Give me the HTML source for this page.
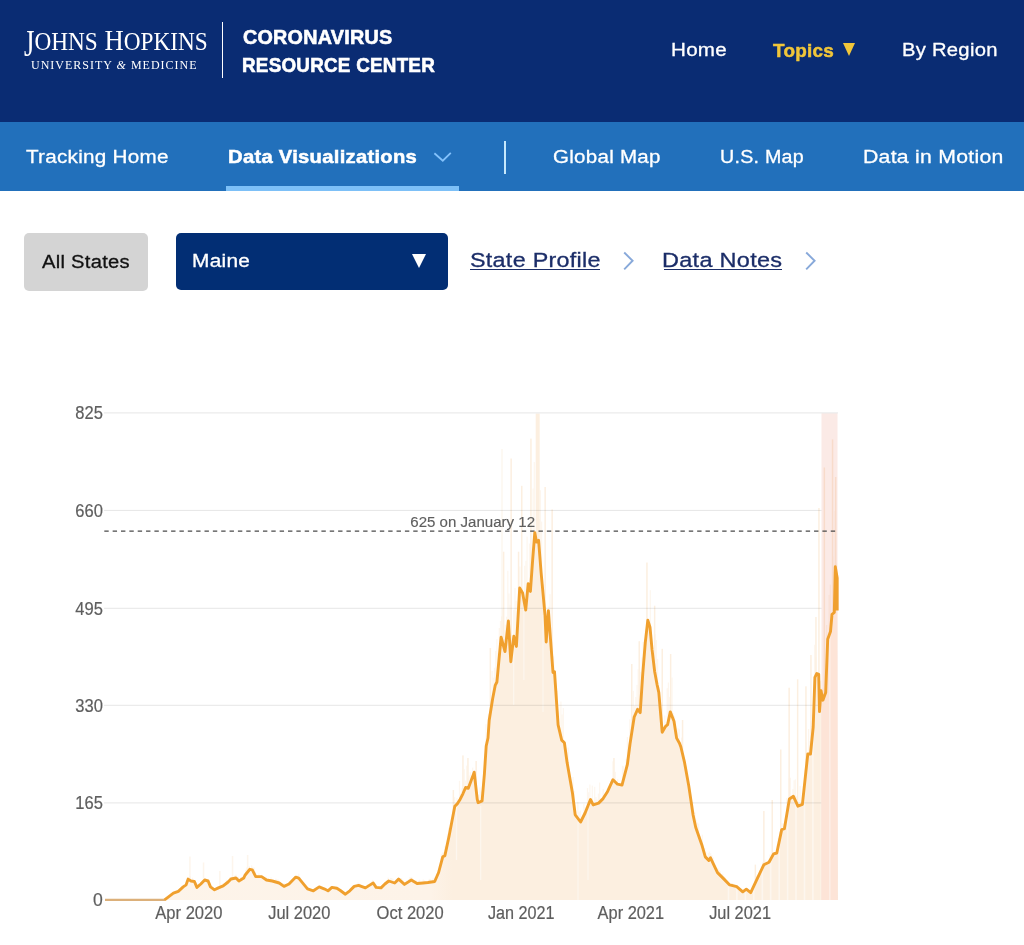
<!DOCTYPE html>
<html><head><meta charset="utf-8">
<style>
*{margin:0;padding:0;box-sizing:border-box}
html,body{width:1024px;height:945px;overflow:hidden;background:#fff;font-family:"Liberation Sans",sans-serif}
.a{position:absolute;white-space:nowrap;transform-origin:0 0}
#hdr{position:absolute;left:0;top:0;width:1024px;height:122px;background:#0a2c73}
#sub{position:absolute;left:0;top:122px;width:1024px;height:68.7px;background:#2270bb}
#ul{position:absolute;left:226px;top:185.7px;width:232.8px;height:5px;background:#7dc0f7}
.mont{font-weight:normal;color:#fff;font-size:19px}
.b{font-weight:bold;-webkit-text-stroke:0.6px currentColor}
.r{-webkit-text-stroke:0.3px currentColor}
</style></head><body>
<div id="hdr"></div>
<div id="sub"></div>
<div id="ul"></div>
<!-- logo -->
<div class="a" id="jh" style="left:23.9px;top:23.6px;font-family:'Liberation Serif',serif;color:#fff;font-size:28.7px;line-height:normal;transform:scaleX(0.9303)"><span style="display:inline-block;transform:scaleY(1.3);transform-origin:50% 22%">J</span><span style="font-size:25px">OHNS</span> H<span style="font-size:25px">OPKINS</span></div>
<div class="a" id="um" style="left:31px;top:57.5px;font-family:'Liberation Serif',serif;color:#fff;font-size:12px;letter-spacing:1.0px">UNIVERSITY <i>&amp;</i> MEDICINE</div>
<div class="a" style="left:221.8px;top:22px;width:1.3px;height:55.6px;background:#fff"></div>
<div class="a b" style="left:243.2px;top:26.1px;color:#fff;font-size:19.5px;letter-spacing:0.25px;transform:scaleX(1.0123)">CORONAVIRUS</div>
<div class="a b" style="left:242.2px;top:53.8px;color:#fff;font-size:19.5px;letter-spacing:0.25px;transform:scaleX(0.9658)">RESOURCE CENTER</div>
<div class="a r" style="left:671px;top:39.3px;color:#fff;font-size:18.8px;letter-spacing:0.25px;transform:scaleX(1.0961)">Home</div>
<div class="a b" style="left:772.8px;top:39.6px;color:#f1c63a;font-size:18.5px;letter-spacing:0.25px;transform:scaleX(1.0204);-webkit-text-stroke-width:0.5px">Topics</div>
<div class="a" style="left:842.7px;top:43.1px;width:0;height:0;border-left:6.6px solid transparent;border-right:6.6px solid transparent;border-top:13.2px solid #f1c63a"></div>
<div class="a r" style="left:902.1px;top:39.3px;color:#fff;font-size:18.8px;letter-spacing:0.25px;transform:scaleX(1.0759)">By Region</div>
<!-- subnav -->
<div class="a r" style="left:26.2px;top:145.9px;color:#fff;font-size:18.8px;letter-spacing:0.25px;transform:scaleX(1.0992)">Tracking Home</div>
<div class="a b" style="left:228px;top:145.7px;color:#fff;font-size:18.5px;letter-spacing:0.25px;transform:scaleX(1.093);-webkit-text-stroke-width:0.5px">Data Visualizations</div>
<svg class="a" style="left:432px;top:150px" width="22" height="14"><polyline points="2.4,3.3 10.8,10.7 18.8,2.9" fill="none" stroke="#84c2fb" stroke-width="1.8"/></svg>
<div class="a" style="left:504px;top:141.2px;width:2.1px;height:32.4px;background:#c6e8fc"></div>
<div class="a r" style="left:553.0px;top:145.9px;color:#fff;font-size:18.8px;letter-spacing:0.25px;transform:scaleX(1.0928)">Global Map</div>
<div class="a r" style="left:720.0px;top:145.9px;color:#fff;font-size:18.8px;letter-spacing:0.25px;transform:scaleX(1.0456)">U.S. Map</div>
<div class="a r" style="left:863.3px;top:145.9px;color:#fff;font-size:18.8px;letter-spacing:0.25px;transform:scaleX(1.1285)">Data in Motion</div>
<!-- controls -->
<div class="a" style="left:24px;top:233px;width:124px;height:58px;background:#d4d4d4;border-radius:5px"></div>
<div class="a r" style="left:42.3px;top:250.9px;color:#111;font-size:18.8px;letter-spacing:0.25px;transform:scaleX(1.0741)">All States</div>
<div class="a" style="left:176px;top:233px;width:272px;height:57px;background:#022e74;border-radius:5px"></div>
<div class="a r" style="left:191.6px;top:249.9px;color:#fff;font-size:18.8px;letter-spacing:0.25px;transform:scaleX(1.11)">Maine</div>
<div class="a" style="left:412px;top:254px;width:0;height:0;border-left:7px solid transparent;border-right:7px solid transparent;border-top:14px solid #fff"></div>
<div class="a r" style="left:469.5px;top:247.8px;color:#1b2d68;font-size:20.5px;letter-spacing:0.25px;transform:scaleX(1.1381)">State Profile</div>
<div class="a" style="left:469.5px;top:268.7px;width:130.5px;height:1.4px;background:#1b2d68"></div>
<svg class="a" style="left:620px;top:250px" width="16" height="22"><polyline points="4.2,2.5 12.6,10.7 4.2,19.3" fill="none" stroke="#88a9da" stroke-width="1.9"/></svg>
<div class="a r" style="left:662.0px;top:247.8px;color:#1b2d68;font-size:20.5px;letter-spacing:0.25px;transform:scaleX(1.1457)">Data Notes</div>
<div class="a" style="left:663.5px;top:268.7px;width:118.5px;height:1.4px;background:#1b2d68"></div>
<svg class="a" style="left:802px;top:250px" width="16" height="22"><polyline points="4.2,2.5 12.6,10.7 4.2,19.3" fill="none" stroke="#88a9da" stroke-width="1.9"/></svg>
<!-- chart -->
<svg class="a" style="left:0;top:0" width="1024" height="945">
<defs><linearGradient id="fg" gradientUnits="userSpaceOnUse" x1="105" y1="0" x2="837" y2="0">
<stop offset="0" stop-color="#fdf4ea"/><stop offset="0.445" stop-color="#fdf3e8"/><stop offset="0.475" stop-color="#fcefe0"/><stop offset="1" stop-color="#fcefe0"/></linearGradient></defs>
<path d="M164.6,899.8 L173.4,893.2 L178.3,891.3 L183.2,886.9 L186.1,884.9 L188.1,879.1 L191.0,881.0 L194.4,881.5 L196.9,887.4 L200.8,884.0 L204.7,880.0 L208.1,881.0 L210.5,886.9 L214.5,889.8 L218.4,887.9 L223.2,885.9 L228.1,882.0 L231.0,879.0 L236.0,878.0 L238.9,881.0 L243.8,878.0 L245.0,875.2 L249.9,869.3 L252.3,869.8 L255.7,876.6 L261.6,876.6 L266.5,880.0 L272.3,881.0 L279.2,883.0 L284.0,886.4 L289.0,884.0 L295.8,877.1 L298.7,878.1 L307.5,888.8 L313.4,890.8 L319.2,886.9 L324.1,888.8 L328.0,890.8 L331.9,887.4 L336.8,888.3 L340.0,890.3 L345.4,894.2 L349.8,890.8 L354.2,886.4 L358.6,885.4 L365.4,887.9 L369.3,885.4 L373.2,883.0 L376.1,887.4 L381.0,887.9 L384.9,884.0 L388.8,881.0 L394.7,883.0 L398.6,879.1 L404.5,884.4 L411.3,880.0 L417.1,883.5 L423.0,883.0 L427.9,882.5 L434.7,881.5 L438.6,872.5 L442.8,856.7 L444.9,855.6 L449.2,835.5 L454.8,806.3 L457.5,803.6 L460.2,799.2 L462.9,793.8 L465.6,787.5 L468.3,788.3 L471.0,781.1 L474.2,772.2 L477.2,799.1 L478.1,802.7 L482.1,800.9 L484.4,774.0 L486.2,746.0 L488.0,738.0 L489.2,720.2 L492.6,699.0 L495.2,685.4 L496.9,682.0 L501.1,637.1 L505.0,651.5 L508.4,621.0 L510.8,661.7 L513.8,636.3 L516.4,646.4 L519.7,588.0 L522.6,593.0 L525.7,610.0 L528.2,583.7 L530.4,591.4 L532.6,560.7 L534.8,532.7 L536.5,542.0 L538.6,540.3 L541.1,572.5 L545.0,614.9 L546.2,642.0 L548.4,610.7 L553.0,672.5 L554.5,671.7 L558.1,724.8 L561.7,740.1 L564.4,742.8 L567.1,762.6 L572.5,793.2 L575.2,814.8 L580.6,822.0 L585.1,813.0 L590.5,799.5 L593.2,804.9 L598.6,803.1 L603.1,798.6 L607.6,791.4 L613.0,779.7 L617.5,784.2 L622.0,785.1 L627.4,764.4 L630.0,744.0 L634.2,717.0 L637.6,709.3 L640.2,712.7 L642.7,674.6 L645.3,642.4 L647.8,620.3 L650.0,627.1 L652.0,649.2 L654.6,671.2 L657.1,684.7 L658.8,692.4 L662.2,732.2 L665.6,726.3 L667.6,724.6 L670.3,711.9 L674.0,721.2 L676.6,738.1 L679.5,743.2 L680.9,747.0 L684.4,761.8 L688.7,785.4 L693.1,815.0 L695.7,827.3 L701.8,844.7 L705.3,856.9 L708.8,860.4 L710.5,857.8 L717.5,872.6 L724.5,879.6 L729.7,884.9 L736.7,886.6 L742.8,891.8 L746.3,889.2 L750.7,892.7 L756.8,879.6 L763.8,864.8 L769.0,862.2 L773.6,853.9 L776.8,853.0 L781.7,829.6 L784.4,828.7 L789.4,799.0 L793.4,796.3 L797.9,806.2 L802.4,804.4 L805.1,779.2 L807.8,754.0 L810.5,754.0 L813.2,727.0 L814.9,677.3 L816.8,673.5 L818.7,674.4 L819.5,711.6 L821.0,690.6 L822.9,700.2 L825.7,692.6 L827.7,639.2 L830.5,631.5 L832.0,614.4 L834.3,612.5 L835.3,566.7 L837.2,578.1 L837.2,610.6 L837.8,900 L164.6,900 Z" fill="url(#fg)"/>
<g fill="#fcefe0">
<rect x="181.0" y="886.3" width="1.2" height="3.5" opacity="0.55"/>
<rect x="184.6" y="883.8" width="1.2" height="3.2" opacity="0.55"/>
<rect x="185.8" y="880.6" width="1.2" height="4.8" opacity="0.55"/>
<rect x="187.1" y="878.3" width="1.2" height="3.6" opacity="0.55"/>
<rect x="188.3" y="878.4" width="1.2" height="2.7" opacity="0.55"/>
<rect x="189.5" y="876.2" width="1.2" height="5.7" opacity="0.55"/>
<rect x="191.9" y="877.8" width="1.2" height="4.9" opacity="0.55"/>
<rect x="197.9" y="883.6" width="1.2" height="3.9" opacity="0.55"/>
<rect x="200.3" y="882.1" width="1.2" height="3.2" opacity="0.55"/>
<rect x="201.5" y="880.5" width="1.2" height="3.6" opacity="0.55"/>
<rect x="204.0" y="878.2" width="1.2" height="3.4" opacity="0.55"/>
<rect x="208.8" y="882.1" width="1.2" height="3.6" opacity="0.55"/>
<rect x="212.4" y="887.5" width="1.2" height="2.7" opacity="0.55"/>
<rect x="216.0" y="886.9" width="1.2" height="3.3" opacity="0.55"/>
<rect x="217.3" y="886.5" width="1.2" height="3.1" opacity="0.55"/>
<rect x="219.7" y="885.8" width="1.2" height="2.9" opacity="0.55"/>
<rect x="220.9" y="885.4" width="1.2" height="2.7" opacity="0.55"/>
<rect x="222.1" y="883.5" width="1.2" height="4.1" opacity="0.55"/>
<rect x="223.3" y="883.2" width="1.2" height="3.7" opacity="0.55"/>
<rect x="225.7" y="879.9" width="1.2" height="5.1" opacity="0.55"/>
<rect x="228.1" y="880.2" width="1.2" height="2.7" opacity="0.55"/>
<rect x="229.3" y="877.0" width="1.2" height="4.6" opacity="0.55"/>
<rect x="231.7" y="877.0" width="1.2" height="3.2" opacity="0.55"/>
<rect x="234.2" y="875.4" width="1.2" height="4.3" opacity="0.55"/>
<rect x="235.4" y="874.6" width="1.2" height="4.9" opacity="0.55"/>
<rect x="236.6" y="877.0" width="1.2" height="3.7" opacity="0.55"/>
<rect x="237.8" y="876.8" width="1.2" height="5.1" opacity="0.55"/>
<rect x="240.2" y="877.0" width="1.2" height="4.3" opacity="0.55"/>
<rect x="241.4" y="876.8" width="1.2" height="3.8" opacity="0.55"/>
<rect x="242.6" y="876.0" width="1.2" height="3.8" opacity="0.55"/>
<rect x="243.8" y="874.8" width="1.2" height="3.2" opacity="0.55"/>
<rect x="245.0" y="869.9" width="1.2" height="6.0" opacity="0.55"/>
<rect x="246.2" y="867.4" width="1.2" height="7.0" opacity="0.55"/>
<rect x="247.5" y="869.3" width="1.2" height="3.7" opacity="0.55"/>
<rect x="248.7" y="866.2" width="1.2" height="5.4" opacity="0.55"/>
<rect x="251.1" y="865.4" width="1.2" height="5.7" opacity="0.55"/>
<rect x="252.3" y="867.3" width="1.2" height="5.1" opacity="0.55"/>
<rect x="253.5" y="867.6" width="1.2" height="7.3" opacity="0.55"/>
<rect x="254.7" y="871.6" width="1.2" height="5.7" opacity="0.55"/>
<rect x="257.1" y="875.3" width="1.2" height="2.8" opacity="0.55"/>
<rect x="258.3" y="873.5" width="1.2" height="4.6" opacity="0.55"/>
<rect x="260.7" y="874.9" width="1.2" height="3.2" opacity="0.55"/>
<rect x="265.6" y="876.6" width="1.2" height="4.7" opacity="0.55"/>
<rect x="269.2" y="879.5" width="1.2" height="2.6" opacity="0.55"/>
<rect x="270.4" y="877.2" width="1.2" height="5.1" opacity="0.55"/>
<rect x="272.8" y="880.0" width="1.2" height="2.8" opacity="0.55"/>
<rect x="274.0" y="879.9" width="1.2" height="3.3" opacity="0.55"/>
<rect x="275.2" y="878.6" width="1.2" height="4.9" opacity="0.55"/>
<rect x="276.4" y="879.4" width="1.2" height="4.5" opacity="0.55"/>
<rect x="277.7" y="879.6" width="1.2" height="4.7" opacity="0.55"/>
<rect x="282.5" y="883.1" width="1.2" height="4.2" opacity="0.55"/>
<rect x="283.7" y="883.4" width="1.2" height="4.4" opacity="0.55"/>
<rect x="289.7" y="881.2" width="1.2" height="2.9" opacity="0.55"/>
<rect x="290.9" y="879.4" width="1.2" height="3.5" opacity="0.55"/>
<rect x="294.6" y="876.3" width="1.2" height="2.9" opacity="0.55"/>
<rect x="295.8" y="876.2" width="1.2" height="2.6" opacity="0.55"/>
<rect x="297.0" y="875.4" width="1.2" height="3.8" opacity="0.55"/>
<rect x="298.2" y="873.7" width="1.2" height="6.0" opacity="0.55"/>
<rect x="299.4" y="876.9" width="1.2" height="4.3" opacity="0.55"/>
<rect x="300.6" y="879.5" width="1.2" height="3.2" opacity="0.55"/>
<rect x="301.8" y="880.6" width="1.2" height="3.5" opacity="0.55"/>
<rect x="303.0" y="882.0" width="1.2" height="3.6" opacity="0.55"/>
<rect x="305.4" y="884.5" width="1.2" height="4.0" opacity="0.55"/>
<rect x="306.6" y="886.6" width="1.2" height="3.3" opacity="0.55"/>
<rect x="307.9" y="887.1" width="1.2" height="3.5" opacity="0.55"/>
<rect x="309.1" y="887.8" width="1.2" height="3.2" opacity="0.55"/>
<rect x="313.9" y="888.9" width="1.2" height="2.7" opacity="0.55"/>
<rect x="328.4" y="888.1" width="1.2" height="3.4" opacity="0.55"/>
<rect x="329.6" y="887.6" width="1.2" height="2.8" opacity="0.55"/>
<rect x="336.8" y="886.7" width="1.2" height="3.5" opacity="0.55"/>
<rect x="338.1" y="887.2" width="1.2" height="3.8" opacity="0.55"/>
<rect x="346.5" y="891.6" width="1.2" height="2.7" opacity="0.55"/>
<rect x="350.1" y="887.8" width="1.2" height="3.6" opacity="0.55"/>
<rect x="351.3" y="887.6" width="1.2" height="2.6" opacity="0.55"/>
<rect x="353.8" y="885.0" width="1.2" height="2.8" opacity="0.55"/>
<rect x="356.2" y="884.5" width="1.2" height="2.8" opacity="0.55"/>
<rect x="357.4" y="882.4" width="1.2" height="4.6" opacity="0.55"/>
<rect x="358.6" y="883.0" width="1.2" height="4.1" opacity="0.55"/>
<rect x="359.8" y="884.1" width="1.2" height="3.4" opacity="0.55"/>
<rect x="364.6" y="885.9" width="1.2" height="3.4" opacity="0.55"/>
<rect x="365.8" y="886.0" width="1.2" height="2.7" opacity="0.55"/>
<rect x="367.0" y="884.3" width="1.2" height="3.7" opacity="0.55"/>
<rect x="370.7" y="881.5" width="1.2" height="4.2" opacity="0.55"/>
<rect x="371.9" y="879.9" width="1.2" height="5.1" opacity="0.55"/>
<rect x="373.1" y="880.8" width="1.2" height="4.4" opacity="0.55"/>
<rect x="374.3" y="883.1" width="1.2" height="3.9" opacity="0.55"/>
<rect x="375.5" y="885.2" width="1.2" height="3.7" opacity="0.55"/>
<rect x="376.7" y="885.7" width="1.2" height="3.4" opacity="0.55"/>
<rect x="379.1" y="886.7" width="1.2" height="2.6" opacity="0.55"/>
<rect x="386.4" y="880.0" width="1.2" height="3.9" opacity="0.55"/>
<rect x="387.6" y="877.6" width="1.2" height="5.4" opacity="0.55"/>
<rect x="388.8" y="879.9" width="1.2" height="2.8" opacity="0.55"/>
<rect x="390.0" y="877.9" width="1.2" height="5.2" opacity="0.55"/>
<rect x="391.2" y="878.1" width="1.2" height="5.4" opacity="0.55"/>
<rect x="392.4" y="878.8" width="1.2" height="5.2" opacity="0.55"/>
<rect x="399.7" y="878.3" width="1.2" height="3.8" opacity="0.55"/>
<rect x="400.9" y="878.1" width="1.2" height="5.0" opacity="0.55"/>
<rect x="402.1" y="879.7" width="1.2" height="4.5" opacity="0.55"/>
<rect x="403.3" y="882.6" width="1.2" height="2.8" opacity="0.55"/>
<rect x="404.5" y="882.0" width="1.2" height="3.5" opacity="0.55"/>
<rect x="405.7" y="880.5" width="1.2" height="4.3" opacity="0.55"/>
<rect x="408.1" y="879.3" width="1.2" height="3.9" opacity="0.55"/>
<rect x="409.3" y="877.2" width="1.2" height="5.2" opacity="0.55"/>
<rect x="410.5" y="876.9" width="1.2" height="4.7" opacity="0.55"/>
<rect x="411.7" y="877.7" width="1.2" height="4.5" opacity="0.55"/>
<rect x="412.9" y="879.9" width="1.2" height="3.0" opacity="0.55"/>
<rect x="415.4" y="880.0" width="1.2" height="4.3" opacity="0.55"/>
<rect x="417.8" y="880.6" width="1.2" height="4.3" opacity="0.55"/>
<rect x="419.0" y="879.7" width="1.2" height="5.0" opacity="0.55"/>
<rect x="422.6" y="879.5" width="1.2" height="5.0" opacity="0.55"/>
<rect x="423.8" y="880.4" width="1.2" height="4.0" opacity="0.55"/>
<rect x="428.7" y="878.9" width="1.2" height="4.9" opacity="0.55"/>
<rect x="429.9" y="879.1" width="1.2" height="4.5" opacity="0.55"/>
<rect x="432.3" y="878.6" width="1.2" height="4.7" opacity="0.55"/>
<rect x="433.5" y="877.6" width="1.2" height="5.5" opacity="0.55"/>
<rect x="434.7" y="877.6" width="1.2" height="4.0" opacity="0.55"/>
<rect x="435.9" y="876.3" width="1.2" height="2.5" opacity="0.55"/>
<rect x="437.1" y="872.1" width="1.2" height="4.0" opacity="0.55"/>
<rect x="440.7" y="854.2" width="1.2" height="9.5" opacity="0.55"/>
<rect x="441.9" y="852.4" width="1.2" height="6.8" opacity="0.55"/>
<rect x="443.1" y="852.2" width="1.2" height="5.5" opacity="0.55"/>
<rect x="444.4" y="846.3" width="1.2" height="10.5" opacity="0.55"/>
<rect x="445.6" y="846.3" width="1.2" height="4.9" opacity="0.55"/>
<rect x="446.8" y="833.7" width="1.2" height="11.9" opacity="0.55"/>
<rect x="448.0" y="827.7" width="1.2" height="12.2" opacity="0.55"/>
<rect x="450.4" y="824.8" width="1.2" height="2.8" opacity="0.55"/>
<rect x="451.6" y="817.5" width="1.2" height="3.8" opacity="0.55"/>
<rect x="452.8" y="812.2" width="1.2" height="2.8" opacity="0.55"/>
<rect x="454.0" y="797.2" width="1.2" height="11.5" opacity="0.55"/>
<rect x="455.2" y="803.4" width="1.2" height="3.4" opacity="0.55"/>
<rect x="456.4" y="798.0" width="1.2" height="7.6" opacity="0.55"/>
<rect x="458.9" y="780.9" width="1.2" height="21.0" opacity="0.55"/>
<rect x="460.1" y="793.6" width="1.2" height="6.1" opacity="0.55"/>
<rect x="461.3" y="788.2" width="1.2" height="9.2" opacity="0.55"/>
<rect x="462.5" y="781.9" width="1.2" height="13.0" opacity="0.55"/>
<rect x="463.7" y="769.3" width="1.2" height="22.7" opacity="0.55"/>
<rect x="464.9" y="780.6" width="1.2" height="8.6" opacity="0.55"/>
<rect x="466.1" y="765.6" width="1.2" height="23.7" opacity="0.55"/>
<rect x="467.3" y="778.6" width="1.2" height="11.1" opacity="0.55"/>
<rect x="468.5" y="775.5" width="1.2" height="12.2" opacity="0.55"/>
<rect x="469.7" y="772.2" width="1.2" height="12.2" opacity="0.55"/>
<rect x="472.1" y="767.7" width="1.2" height="10.0" opacity="0.55"/>
<rect x="475.8" y="773.6" width="1.2" height="19.5" opacity="0.55"/>
<rect x="478.2" y="794.8" width="1.2" height="9.1" opacity="0.55"/>
<rect x="479.4" y="787.5" width="1.2" height="15.8" opacity="0.55"/>
<rect x="480.6" y="791.4" width="1.2" height="11.4" opacity="0.55"/>
<rect x="481.8" y="793.4" width="1.2" height="5.4" opacity="0.55"/>
<rect x="483.0" y="772.7" width="1.2" height="12.0" opacity="0.55"/>
<rect x="484.2" y="754.2" width="1.2" height="14.7" opacity="0.55"/>
<rect x="485.4" y="724.2" width="1.2" height="26.0" opacity="0.55"/>
<rect x="487.8" y="714.3" width="1.2" height="18.6" opacity="0.55"/>
<rect x="489.1" y="714.3" width="1.2" height="4.6" opacity="0.55"/>
<rect x="490.3" y="705.1" width="1.2" height="6.2" opacity="0.55"/>
<rect x="491.5" y="671.0" width="1.2" height="32.8" opacity="0.55"/>
<rect x="492.7" y="677.7" width="1.2" height="19.3" opacity="0.55"/>
<rect x="493.9" y="667.7" width="1.2" height="22.9" opacity="0.55"/>
<rect x="495.1" y="651.0" width="1.2" height="35.0" opacity="0.55"/>
<rect x="496.3" y="639.2" width="1.2" height="44.3" opacity="0.55"/>
<rect x="497.5" y="653.0" width="1.2" height="17.6" opacity="0.55"/>
<rect x="498.7" y="628.0" width="1.2" height="29.6" opacity="0.55"/>
<rect x="499.9" y="621.0" width="1.2" height="23.7" opacity="0.55"/>
<rect x="501.1" y="616.4" width="1.2" height="24.5" opacity="0.55"/>
<rect x="502.3" y="608.8" width="1.2" height="36.6" opacity="0.55"/>
<rect x="503.5" y="630.2" width="1.2" height="19.7" opacity="0.55"/>
<rect x="504.8" y="624.7" width="1.2" height="25.2" opacity="0.55"/>
<rect x="506.0" y="616.7" width="1.2" height="22.3" opacity="0.55"/>
<rect x="507.2" y="570.8" width="1.2" height="57.3" opacity="0.55"/>
<rect x="508.4" y="593.5" width="1.2" height="38.9" opacity="0.55"/>
<rect x="509.6" y="604.9" width="1.2" height="47.9" opacity="0.55"/>
<rect x="510.8" y="606.9" width="1.2" height="51.2" opacity="0.55"/>
<rect x="512.0" y="641.3" width="1.2" height="6.6" opacity="0.55"/>
<rect x="513.2" y="609.7" width="1.2" height="28.1" opacity="0.55"/>
<rect x="514.4" y="588.0" width="1.2" height="54.5" opacity="0.55"/>
<rect x="515.6" y="600.8" width="1.2" height="46.5" opacity="0.55"/>
<rect x="519.3" y="566.6" width="1.2" height="23.1" opacity="0.55"/>
<rect x="521.7" y="587.8" width="1.2" height="6.1" opacity="0.55"/>
<rect x="524.1" y="565.8" width="1.2" height="40.1" opacity="0.55"/>
<rect x="525.3" y="560.8" width="1.2" height="48.7" opacity="0.55"/>
<rect x="526.5" y="536.7" width="1.2" height="60.1" opacity="0.55"/>
<rect x="528.9" y="543.6" width="1.2" height="46.2" opacity="0.55"/>
<rect x="530.1" y="546.7" width="1.2" height="41.7" opacity="0.55"/>
<rect x="532.5" y="488.6" width="1.2" height="66.7" opacity="0.55"/>
<rect x="533.7" y="462.1" width="1.2" height="77.9" opacity="0.55"/>
<rect x="535.0" y="533.5" width="1.2" height="4.9" opacity="0.55"/>
<rect x="536.2" y="467.6" width="1.2" height="75.7" opacity="0.55"/>
<rect x="537.4" y="520.1" width="1.2" height="22.2" opacity="0.55"/>
<rect x="538.6" y="519.0" width="1.2" height="30.2" opacity="0.55"/>
<rect x="539.8" y="490.2" width="1.2" height="74.6" opacity="0.55"/>
<rect x="541.0" y="521.6" width="1.2" height="57.8" opacity="0.55"/>
<rect x="543.4" y="584.5" width="1.2" height="21.2" opacity="0.55"/>
<rect x="544.6" y="594.9" width="1.2" height="26.5" opacity="0.55"/>
<rect x="545.8" y="627.9" width="1.2" height="12.4" opacity="0.55"/>
<rect x="548.2" y="606.5" width="1.2" height="11.7" opacity="0.55"/>
<rect x="549.5" y="594.2" width="1.2" height="40.2" opacity="0.55"/>
<rect x="551.9" y="642.0" width="1.2" height="24.9" opacity="0.55"/>
<rect x="553.1" y="656.4" width="1.2" height="17.2" opacity="0.55"/>
<rect x="555.5" y="687.1" width="1.2" height="9.6" opacity="0.55"/>
<rect x="556.7" y="690.8" width="1.2" height="23.7" opacity="0.55"/>
<rect x="557.9" y="711.2" width="1.2" height="16.8" opacity="0.55"/>
<rect x="560.3" y="701.6" width="1.2" height="36.7" opacity="0.55"/>
<rect x="561.5" y="714.6" width="1.2" height="27.5" opacity="0.55"/>
<rect x="562.7" y="708.1" width="1.2" height="35.1" opacity="0.55"/>
<rect x="565.2" y="749.5" width="1.2" height="4.7" opacity="0.55"/>
<rect x="567.6" y="747.6" width="1.2" height="22.6" opacity="0.55"/>
<rect x="568.8" y="772.7" width="1.2" height="4.4" opacity="0.55"/>
<rect x="571.2" y="782.1" width="1.2" height="8.6" opacity="0.55"/>
<rect x="572.4" y="777.1" width="1.2" height="21.7" opacity="0.55"/>
<rect x="573.6" y="791.0" width="1.2" height="17.4" opacity="0.55"/>
<rect x="574.8" y="813.4" width="1.2" height="3.2" opacity="0.55"/>
<rect x="577.2" y="802.1" width="1.2" height="17.7" opacity="0.55"/>
<rect x="578.4" y="811.6" width="1.2" height="9.8" opacity="0.55"/>
<rect x="579.7" y="810.6" width="1.2" height="12.4" opacity="0.55"/>
<rect x="583.3" y="804.0" width="1.2" height="13.0" opacity="0.55"/>
<rect x="584.5" y="807.4" width="1.2" height="7.1" opacity="0.55"/>
<rect x="586.9" y="788.1" width="1.2" height="20.4" opacity="0.55"/>
<rect x="588.1" y="792.3" width="1.2" height="13.1" opacity="0.55"/>
<rect x="589.3" y="784.5" width="1.2" height="18.0" opacity="0.55"/>
<rect x="591.7" y="785.6" width="1.2" height="19.0" opacity="0.55"/>
<rect x="594.1" y="786.9" width="1.2" height="19.0" opacity="0.55"/>
<rect x="595.4" y="797.0" width="1.2" height="8.5" opacity="0.55"/>
<rect x="596.6" y="799.6" width="1.2" height="5.5" opacity="0.55"/>
<rect x="597.8" y="793.6" width="1.2" height="11.1" opacity="0.55"/>
<rect x="599.0" y="782.5" width="1.2" height="21.1" opacity="0.55"/>
<rect x="600.2" y="798.7" width="1.2" height="3.7" opacity="0.55"/>
<rect x="602.6" y="789.1" width="1.2" height="10.9" opacity="0.55"/>
<rect x="603.8" y="795.0" width="1.2" height="3.0" opacity="0.55"/>
<rect x="609.9" y="781.3" width="1.2" height="5.4" opacity="0.55"/>
<rect x="611.1" y="778.8" width="1.2" height="5.3" opacity="0.55"/>
<rect x="612.3" y="761.4" width="1.2" height="20.1" opacity="0.55"/>
<rect x="613.5" y="777.4" width="1.2" height="4.9" opacity="0.55"/>
<rect x="614.7" y="771.9" width="1.2" height="11.5" opacity="0.55"/>
<rect x="617.1" y="779.2" width="1.2" height="6.6" opacity="0.55"/>
<rect x="619.5" y="782.7" width="1.2" height="3.5" opacity="0.55"/>
<rect x="621.9" y="765.8" width="1.2" height="18.8" opacity="0.55"/>
<rect x="623.1" y="766.4" width="1.2" height="13.5" opacity="0.55"/>
<rect x="625.6" y="758.9" width="1.2" height="11.7" opacity="0.55"/>
<rect x="626.8" y="737.1" width="1.2" height="28.9" opacity="0.55"/>
<rect x="629.2" y="719.3" width="1.2" height="27.9" opacity="0.55"/>
<rect x="630.4" y="726.8" width="1.2" height="12.3" opacity="0.55"/>
<rect x="631.6" y="715.7" width="1.2" height="15.7" opacity="0.55"/>
<rect x="632.8" y="690.9" width="1.2" height="32.7" opacity="0.55"/>
<rect x="634.0" y="705.7" width="1.2" height="11.8" opacity="0.55"/>
<rect x="635.2" y="697.1" width="1.2" height="17.7" opacity="0.55"/>
<rect x="636.4" y="684.9" width="1.2" height="27.2" opacity="0.55"/>
<rect x="637.6" y="669.3" width="1.2" height="42.4" opacity="0.55"/>
<rect x="638.8" y="703.7" width="1.2" height="9.5" opacity="0.55"/>
<rect x="640.1" y="671.9" width="1.2" height="35.4" opacity="0.55"/>
<rect x="641.3" y="657.5" width="1.2" height="31.4" opacity="0.55"/>
<rect x="642.5" y="642.1" width="1.2" height="29.5" opacity="0.55"/>
<rect x="643.7" y="640.6" width="1.2" height="16.0" opacity="0.55"/>
<rect x="644.9" y="629.4" width="1.2" height="12.9" opacity="0.55"/>
<rect x="649.7" y="590.2" width="1.2" height="41.9" opacity="0.55"/>
<rect x="650.9" y="639.1" width="1.2" height="6.4" opacity="0.55"/>
<rect x="654.5" y="634.2" width="1.2" height="41.5" opacity="0.55"/>
<rect x="655.8" y="640.1" width="1.2" height="42.1" opacity="0.55"/>
<rect x="657.0" y="658.9" width="1.2" height="29.4" opacity="0.55"/>
<rect x="658.2" y="686.8" width="1.2" height="6.9" opacity="0.55"/>
<rect x="659.4" y="703.2" width="1.2" height="4.5" opacity="0.55"/>
<rect x="660.6" y="715.1" width="1.2" height="6.7" opacity="0.55"/>
<rect x="661.8" y="719.4" width="1.2" height="14.0" opacity="0.55"/>
<rect x="664.2" y="715.5" width="1.2" height="13.6" opacity="0.55"/>
<rect x="665.4" y="722.3" width="1.2" height="5.2" opacity="0.55"/>
<rect x="666.6" y="688.2" width="1.2" height="38.2" opacity="0.55"/>
<rect x="667.8" y="682.5" width="1.2" height="39.6" opacity="0.55"/>
<rect x="669.0" y="696.9" width="1.2" height="19.6" opacity="0.55"/>
<rect x="670.3" y="710.3" width="1.2" height="4.5" opacity="0.55"/>
<rect x="671.5" y="677.6" width="1.2" height="40.2" opacity="0.55"/>
<rect x="672.7" y="713.3" width="1.2" height="7.6" opacity="0.55"/>
<rect x="673.9" y="716.2" width="1.2" height="9.6" opacity="0.55"/>
<rect x="676.3" y="730.1" width="1.2" height="10.1" opacity="0.55"/>
<rect x="677.5" y="728.3" width="1.2" height="13.9" opacity="0.55"/>
<rect x="678.7" y="729.4" width="1.2" height="15.0" opacity="0.55"/>
<rect x="681.1" y="737.6" width="1.2" height="14.4" opacity="0.55"/>
<rect x="683.5" y="757.7" width="1.2" height="4.5" opacity="0.55"/>
<rect x="686.0" y="766.3" width="1.2" height="8.8" opacity="0.55"/>
<rect x="689.6" y="792.0" width="1.2" height="4.9" opacity="0.55"/>
<rect x="690.8" y="802.2" width="1.2" height="2.7" opacity="0.55"/>
<rect x="692.0" y="802.1" width="1.2" height="11.1" opacity="0.55"/>
<rect x="693.2" y="810.7" width="1.2" height="9.1" opacity="0.55"/>
<rect x="694.4" y="812.5" width="1.2" height="13.1" opacity="0.55"/>
<rect x="695.6" y="819.7" width="1.2" height="10.6" opacity="0.55"/>
<rect x="696.8" y="822.5" width="1.2" height="11.2" opacity="0.55"/>
<rect x="698.0" y="823.6" width="1.2" height="13.6" opacity="0.55"/>
<rect x="699.2" y="835.8" width="1.2" height="4.9" opacity="0.55"/>
<rect x="700.5" y="840.4" width="1.2" height="3.7" opacity="0.55"/>
<rect x="701.7" y="834.7" width="1.2" height="13.1" opacity="0.55"/>
<rect x="704.1" y="848.1" width="1.2" height="8.1" opacity="0.55"/>
<rect x="705.3" y="852.2" width="1.2" height="6.8" opacity="0.55"/>
<rect x="707.7" y="852.9" width="1.2" height="8.5" opacity="0.55"/>
<rect x="708.9" y="851.6" width="1.2" height="9.3" opacity="0.55"/>
<rect x="710.1" y="853.3" width="1.2" height="6.5" opacity="0.55"/>
<rect x="711.3" y="855.0" width="1.2" height="7.3" opacity="0.55"/>
<rect x="712.5" y="857.2" width="1.2" height="7.7" opacity="0.55"/>
<rect x="714.9" y="865.6" width="1.2" height="4.4" opacity="0.55"/>
<rect x="716.2" y="868.5" width="1.2" height="4.0" opacity="0.55"/>
<rect x="717.4" y="868.3" width="1.2" height="6.2" opacity="0.55"/>
<rect x="718.6" y="870.0" width="1.2" height="5.8" opacity="0.55"/>
<rect x="719.8" y="871.2" width="1.2" height="5.7" opacity="0.55"/>
<rect x="721.0" y="874.2" width="1.2" height="4.0" opacity="0.55"/>
<rect x="722.2" y="873.7" width="1.2" height="5.7" opacity="0.55"/>
<rect x="723.4" y="876.3" width="1.2" height="4.3" opacity="0.55"/>
<rect x="724.6" y="877.6" width="1.2" height="4.2" opacity="0.55"/>
<rect x="731.9" y="883.0" width="1.2" height="4.0" opacity="0.55"/>
<rect x="733.1" y="884.4" width="1.2" height="2.9" opacity="0.55"/>
<rect x="734.3" y="884.5" width="1.2" height="3.2" opacity="0.55"/>
<rect x="735.5" y="884.8" width="1.2" height="3.1" opacity="0.55"/>
<rect x="736.7" y="885.4" width="1.2" height="3.2" opacity="0.55"/>
<rect x="740.3" y="888.6" width="1.2" height="3.1" opacity="0.55"/>
<rect x="741.5" y="889.9" width="1.2" height="2.8" opacity="0.55"/>
<rect x="745.1" y="888.3" width="1.2" height="2.8" opacity="0.55"/>
<rect x="747.6" y="889.3" width="1.2" height="2.9" opacity="0.55"/>
<rect x="752.4" y="886.0" width="1.2" height="3.3" opacity="0.55"/>
<rect x="754.8" y="880.0" width="1.2" height="4.1" opacity="0.55"/>
<rect x="756.0" y="875.7" width="1.2" height="5.8" opacity="0.55"/>
<rect x="757.2" y="875.5" width="1.2" height="3.4" opacity="0.55"/>
<rect x="758.4" y="873.5" width="1.2" height="2.8" opacity="0.55"/>
<rect x="759.6" y="870.1" width="1.2" height="3.7" opacity="0.55"/>
<rect x="760.9" y="865.7" width="1.2" height="5.6" opacity="0.55"/>
<rect x="762.1" y="862.1" width="1.2" height="6.7" opacity="0.55"/>
<rect x="763.3" y="860.7" width="1.2" height="5.6" opacity="0.55"/>
<rect x="764.5" y="859.7" width="1.2" height="5.9" opacity="0.55"/>
<rect x="769.3" y="854.6" width="1.2" height="7.4" opacity="0.55"/>
<rect x="770.5" y="857.0" width="1.2" height="2.8" opacity="0.55"/>
<rect x="771.7" y="851.7" width="1.2" height="6.0" opacity="0.55"/>
<rect x="775.3" y="852.2" width="1.2" height="2.6" opacity="0.55"/>
<rect x="776.6" y="844.9" width="1.2" height="7.9" opacity="0.55"/>
<rect x="777.8" y="838.1" width="1.2" height="9.0" opacity="0.55"/>
<rect x="779.0" y="831.8" width="1.2" height="9.5" opacity="0.55"/>
<rect x="780.2" y="832.1" width="1.2" height="3.4" opacity="0.55"/>
<rect x="781.4" y="823.2" width="1.2" height="7.8" opacity="0.55"/>
<rect x="782.6" y="823.8" width="1.2" height="6.8" opacity="0.55"/>
<rect x="783.8" y="823.3" width="1.2" height="6.9" opacity="0.55"/>
<rect x="786.2" y="797.9" width="1.2" height="17.9" opacity="0.55"/>
<rect x="788.6" y="778.6" width="1.2" height="22.9" opacity="0.55"/>
<rect x="789.8" y="777.7" width="1.2" height="22.1" opacity="0.55"/>
<rect x="792.3" y="789.0" width="1.2" height="9.1" opacity="0.55"/>
<rect x="793.5" y="780.3" width="1.2" height="19.0" opacity="0.55"/>
<rect x="794.7" y="779.4" width="1.2" height="22.5" opacity="0.55"/>
<rect x="795.9" y="796.2" width="1.2" height="8.4" opacity="0.55"/>
<rect x="797.1" y="803.6" width="1.2" height="3.6" opacity="0.55"/>
<rect x="799.5" y="785.9" width="1.2" height="20.9" opacity="0.55"/>
<rect x="801.9" y="792.9" width="1.2" height="11.9" opacity="0.55"/>
<rect x="804.3" y="769.8" width="1.2" height="12.4" opacity="0.55"/>
<rect x="805.5" y="742.4" width="1.2" height="28.6" opacity="0.55"/>
<rect x="808.0" y="729.0" width="1.2" height="26.5" opacity="0.55"/>
<rect x="809.2" y="741.2" width="1.2" height="14.3" opacity="0.55"/>
<rect x="810.4" y="720.6" width="1.2" height="30.1" opacity="0.55"/>
<rect x="811.6" y="714.3" width="1.2" height="24.3" opacity="0.55"/>
<rect x="812.8" y="719.0" width="1.2" height="3.7" opacity="0.55"/>
<rect x="814.0" y="644.8" width="1.2" height="42.7" opacity="0.55"/>
<rect x="815.2" y="657.2" width="1.2" height="19.7" opacity="0.55"/>
<rect x="818.8" y="692.8" width="1.2" height="17.3" opacity="0.55"/>
<rect x="820.0" y="680.9" width="1.2" height="16.2" opacity="0.55"/>
<rect x="821.3" y="688.4" width="1.2" height="8.0" opacity="0.55"/>
<rect x="823.7" y="687.8" width="1.2" height="10.2" opacity="0.55"/>
<rect x="824.9" y="685.9" width="1.2" height="8.8" opacity="0.55"/>
<rect x="826.1" y="625.0" width="1.2" height="42.8" opacity="0.55"/>
<rect x="828.5" y="594.9" width="1.2" height="41.9" opacity="0.55"/>
<rect x="829.7" y="584.7" width="1.2" height="48.8" opacity="0.55"/>
<rect x="832.1" y="556.5" width="1.2" height="58.8" opacity="0.55"/>
<rect x="833.3" y="571.9" width="1.2" height="42.4" opacity="0.55"/>
<rect x="834.5" y="511.0" width="1.2" height="64.6" opacity="0.55"/>
<rect x="835.7" y="563.7" width="1.2" height="10.7" opacity="0.55"/>
<rect x="189.2" y="856.6" width="1.5" height="25.2" opacity="0.6"/>
<rect x="202.8" y="862.5" width="1.5" height="20.2" opacity="0.6"/>
<rect x="219.1" y="871.0" width="1.5" height="17.8" opacity="0.6"/>
<rect x="231.8" y="856.0" width="1.5" height="24.2" opacity="0.6"/>
<rect x="246.9" y="855.0" width="1.5" height="18.4" opacity="0.6"/>
<rect x="452.6" y="790.0" width="1.5" height="25.1"/>
<rect x="462.2" y="755.4" width="1.5" height="39.7"/>
<rect x="467.2" y="758.0" width="1.5" height="31.7"/>
<rect x="475.4" y="761.0" width="1.5" height="30.6"/>
<rect x="489.6" y="648.0" width="1.5" height="66.2"/>
<rect x="502.9" y="551.7" width="1.5" height="96.1"/>
<rect x="510.4" y="458.5" width="1.5" height="202.2"/>
<rect x="517.8" y="551.7" width="1.5" height="59.0"/>
<rect x="521.0" y="485.8" width="1.5" height="107.3"/>
<rect x="530.2" y="438.6" width="1.5" height="145.9"/>
<rect x="544.4" y="487.0" width="1.5" height="131.7"/>
<rect x="551.4" y="509.4" width="1.5" height="152.5"/>
<rect x="613.2" y="758.0" width="1.5" height="24.2"/>
<rect x="631.0" y="664.0" width="1.5" height="70.6"/>
<rect x="638.5" y="641.2" width="1.5" height="71.8"/>
<rect x="646.2" y="562.5" width="1.5" height="66.4"/>
<rect x="653.9" y="605.7" width="1.5" height="67.0"/>
<rect x="661.5" y="648.8" width="1.5" height="84.9"/>
<rect x="669.9" y="654.0" width="1.5" height="60.2"/>
<rect x="681.8" y="720.0" width="1.5" height="35.3"/>
<rect x="754.6" y="864.6" width="1.5" height="19.5"/>
<rect x="763.1" y="811.0" width="1.5" height="55.2"/>
<rect x="771.5" y="800.0" width="1.5" height="57.7"/>
<rect x="780.0" y="749.5" width="1.5" height="86.4"/>
<rect x="788.4" y="687.7" width="1.5" height="114.6"/>
<rect x="796.9" y="679.3" width="1.5" height="127.7"/>
<rect x="805.2" y="686.3" width="1.5" height="86.0"/>
<rect x="810.2" y="655.0" width="1.5" height="95.5"/>
<rect x="815.2" y="617.0" width="1.5" height="59.6"/>
<rect x="818.2" y="508.0" width="1.5" height="181.8"/>
<rect x="823.6" y="467.5" width="1.5" height="230.1"/>
<rect x="831.8" y="439.4" width="1.5" height="176.1"/>
<rect x="834.9" y="477.0" width="1.5" height="93.0"/>
<rect x="535.7" y="413.7" width="4.0" height="128.8"/>
<rect x="501.3" y="449.0" width="1.4" height="192.9" opacity="0.5"/>
</g>
<g fill="#fff" opacity="0.45">
<rect x="820.6" y="694.6" width="1.6" height="205.4"/>
<rect x="812.1" y="731.5" width="1.6" height="168.5"/>
<rect x="803.7" y="786.8" width="1.6" height="113.2"/>
<rect x="795.2" y="804.1" width="1.6" height="95.9"/>
<rect x="786.8" y="811.7" width="1.6" height="88.3"/>
<rect x="778.4" y="843.8" width="1.6" height="56.2"/>
<rect x="769.9" y="861.1" width="1.6" height="38.9"/>
<rect x="761.5" y="870.1" width="1.6" height="29.9"/>
<rect x="753.0" y="888.0" width="1.6" height="12.0"/>
<rect x="744.6" y="891.9" width="1.6" height="8.1"/>
<rect x="736.1" y="888.8" width="1.6" height="11.2"/>
<rect x="727.7" y="885.6" width="1.6" height="14.4"/>
<rect x="480.1" y="806.0" width="1.2" height="74.0"/>
<rect x="513.1" y="642.0" width="1.2" height="63.0"/>
<rect x="523.3" y="602.6" width="1.2" height="77.4"/>
<rect x="542.4" y="615.0" width="1.2" height="97.0"/>
<rect x="455.9" y="807.1" width="1.2" height="52.9"/>
<rect x="577.4" y="822.0" width="1.2" height="78.0"/>
<rect x="587.4" y="810.0" width="1.2" height="70.0"/>
</g>
<g stroke="#e6e6e6" stroke-width="1" style="mix-blend-mode:multiply">
<line x1="104" y1="412.9" x2="838" y2="412.9"/>
<line x1="104" y1="510.4" x2="821.5" y2="510.4"/>
<line x1="104" y1="608.3" x2="821.5" y2="608.3"/>
<line x1="104" y1="705.3" x2="821.5" y2="705.3"/>
<line x1="104" y1="802.9" x2="821.5" y2="802.9"/>
</g>
<clipPath id="ac"><path d="M164.6,899.8 L173.4,893.2 L178.3,891.3 L183.2,886.9 L186.1,884.9 L188.1,879.1 L191.0,881.0 L194.4,881.5 L196.9,887.4 L200.8,884.0 L204.7,880.0 L208.1,881.0 L210.5,886.9 L214.5,889.8 L218.4,887.9 L223.2,885.9 L228.1,882.0 L231.0,879.0 L236.0,878.0 L238.9,881.0 L243.8,878.0 L245.0,875.2 L249.9,869.3 L252.3,869.8 L255.7,876.6 L261.6,876.6 L266.5,880.0 L272.3,881.0 L279.2,883.0 L284.0,886.4 L289.0,884.0 L295.8,877.1 L298.7,878.1 L307.5,888.8 L313.4,890.8 L319.2,886.9 L324.1,888.8 L328.0,890.8 L331.9,887.4 L336.8,888.3 L340.0,890.3 L345.4,894.2 L349.8,890.8 L354.2,886.4 L358.6,885.4 L365.4,887.9 L369.3,885.4 L373.2,883.0 L376.1,887.4 L381.0,887.9 L384.9,884.0 L388.8,881.0 L394.7,883.0 L398.6,879.1 L404.5,884.4 L411.3,880.0 L417.1,883.5 L423.0,883.0 L427.9,882.5 L434.7,881.5 L438.6,872.5 L442.8,856.7 L444.9,855.6 L449.2,835.5 L454.8,806.3 L457.5,803.6 L460.2,799.2 L462.9,793.8 L465.6,787.5 L468.3,788.3 L471.0,781.1 L474.2,772.2 L477.2,799.1 L478.1,802.7 L482.1,800.9 L484.4,774.0 L486.2,746.0 L488.0,738.0 L489.2,720.2 L492.6,699.0 L495.2,685.4 L496.9,682.0 L501.1,637.1 L505.0,651.5 L508.4,621.0 L510.8,661.7 L513.8,636.3 L516.4,646.4 L519.7,588.0 L522.6,593.0 L525.7,610.0 L528.2,583.7 L530.4,591.4 L532.6,560.7 L534.8,532.7 L536.5,542.0 L538.6,540.3 L541.1,572.5 L545.0,614.9 L546.2,642.0 L548.4,610.7 L553.0,672.5 L554.5,671.7 L558.1,724.8 L561.7,740.1 L564.4,742.8 L567.1,762.6 L572.5,793.2 L575.2,814.8 L580.6,822.0 L585.1,813.0 L590.5,799.5 L593.2,804.9 L598.6,803.1 L603.1,798.6 L607.6,791.4 L613.0,779.7 L617.5,784.2 L622.0,785.1 L627.4,764.4 L630.0,744.0 L634.2,717.0 L637.6,709.3 L640.2,712.7 L642.7,674.6 L645.3,642.4 L647.8,620.3 L650.0,627.1 L652.0,649.2 L654.6,671.2 L657.1,684.7 L658.8,692.4 L662.2,732.2 L665.6,726.3 L667.6,724.6 L670.3,711.9 L674.0,721.2 L676.6,738.1 L679.5,743.2 L680.9,747.0 L684.4,761.8 L688.7,785.4 L693.1,815.0 L695.7,827.3 L701.8,844.7 L705.3,856.9 L708.8,860.4 L710.5,857.8 L717.5,872.6 L724.5,879.6 L729.7,884.9 L736.7,886.6 L742.8,891.8 L746.3,889.2 L750.7,892.7 L756.8,879.6 L763.8,864.8 L769.0,862.2 L773.6,853.9 L776.8,853.0 L781.7,829.6 L784.4,828.7 L789.4,799.0 L793.4,796.3 L797.9,806.2 L802.4,804.4 L805.1,779.2 L807.8,754.0 L810.5,754.0 L813.2,727.0 L814.9,677.3 L816.8,673.5 L818.7,674.4 L819.5,711.6 L821.0,690.6 L822.9,700.2 L825.7,692.6 L827.7,639.2 L830.5,631.5 L832.0,614.4 L834.3,612.5 L835.3,566.7 L837.2,578.1 L837.2,610.6 L837.8,900 L164.6,900 Z"/></clipPath>
<rect x="821.5" y="413.5" width="16" height="486.5" fill="#fbeae6" style="mix-blend-mode:multiply"/>
<g clip-path="url(#ac)"><rect x="821.5" y="413.5" width="16" height="486.5" fill="#fde4d7"/>
<rect x="829.2" y="413.5" width="1.3" height="486.5" fill="#fdf0ea"/></g>
<line x1="104.3" y1="531.2" x2="838" y2="531.2" stroke="#4a4a4a" stroke-width="1.2" stroke-dasharray="4.4,3.95"/>
<line x1="105" y1="899.8" x2="165" y2="899.8" stroke="#dcb07a" stroke-width="2.2"/>
<path d="M164.6,899.8 L173.4,893.2 L178.3,891.3 L183.2,886.9 L186.1,884.9 L188.1,879.1 L191.0,881.0 L194.4,881.5 L196.9,887.4 L200.8,884.0 L204.7,880.0 L208.1,881.0 L210.5,886.9 L214.5,889.8 L218.4,887.9 L223.2,885.9 L228.1,882.0 L231.0,879.0 L236.0,878.0 L238.9,881.0 L243.8,878.0 L245.0,875.2 L249.9,869.3 L252.3,869.8 L255.7,876.6 L261.6,876.6 L266.5,880.0 L272.3,881.0 L279.2,883.0 L284.0,886.4 L289.0,884.0 L295.8,877.1 L298.7,878.1 L307.5,888.8 L313.4,890.8 L319.2,886.9 L324.1,888.8 L328.0,890.8 L331.9,887.4 L336.8,888.3 L340.0,890.3 L345.4,894.2 L349.8,890.8 L354.2,886.4 L358.6,885.4 L365.4,887.9 L369.3,885.4 L373.2,883.0 L376.1,887.4 L381.0,887.9 L384.9,884.0 L388.8,881.0 L394.7,883.0 L398.6,879.1 L404.5,884.4 L411.3,880.0 L417.1,883.5 L423.0,883.0 L427.9,882.5 L434.7,881.5 L438.6,872.5 L442.8,856.7 L444.9,855.6 L449.2,835.5 L454.8,806.3 L457.5,803.6 L460.2,799.2 L462.9,793.8 L465.6,787.5 L468.3,788.3 L471.0,781.1 L474.2,772.2 L477.2,799.1 L478.1,802.7 L482.1,800.9 L484.4,774.0 L486.2,746.0 L488.0,738.0 L489.2,720.2 L492.6,699.0 L495.2,685.4 L496.9,682.0 L501.1,637.1 L505.0,651.5 L508.4,621.0 L510.8,661.7 L513.8,636.3 L516.4,646.4 L519.7,588.0 L522.6,593.0 L525.7,610.0 L528.2,583.7 L530.4,591.4 L532.6,560.7 L534.8,532.7 L536.5,542.0 L538.6,540.3 L541.1,572.5 L545.0,614.9 L546.2,642.0 L548.4,610.7 L553.0,672.5 L554.5,671.7 L558.1,724.8 L561.7,740.1 L564.4,742.8 L567.1,762.6 L572.5,793.2 L575.2,814.8 L580.6,822.0 L585.1,813.0 L590.5,799.5 L593.2,804.9 L598.6,803.1 L603.1,798.6 L607.6,791.4 L613.0,779.7 L617.5,784.2 L622.0,785.1 L627.4,764.4 L630.0,744.0 L634.2,717.0 L637.6,709.3 L640.2,712.7 L642.7,674.6 L645.3,642.4 L647.8,620.3 L650.0,627.1 L652.0,649.2 L654.6,671.2 L657.1,684.7 L658.8,692.4 L662.2,732.2 L665.6,726.3 L667.6,724.6 L670.3,711.9 L674.0,721.2 L676.6,738.1 L679.5,743.2 L680.9,747.0 L684.4,761.8 L688.7,785.4 L693.1,815.0 L695.7,827.3 L701.8,844.7 L705.3,856.9 L708.8,860.4 L710.5,857.8 L717.5,872.6 L724.5,879.6 L729.7,884.9 L736.7,886.6 L742.8,891.8 L746.3,889.2 L750.7,892.7 L756.8,879.6 L763.8,864.8 L769.0,862.2 L773.6,853.9 L776.8,853.0 L781.7,829.6 L784.4,828.7 L789.4,799.0 L793.4,796.3 L797.9,806.2 L802.4,804.4 L805.1,779.2 L807.8,754.0 L810.5,754.0 L813.2,727.0 L814.9,677.3 L816.8,673.5 L818.7,674.4 L819.5,711.6 L821.0,690.6 L822.9,700.2 L825.7,692.6 L827.7,639.2 L830.5,631.5 L832.0,614.4 L834.3,612.5 L835.3,566.7 L837.2,578.1 L837.2,610.6" fill="none" stroke="#f0a02e" stroke-width="2.9" stroke-linejoin="round"/>
<g fill="#5e5e5e" font-size="17.6" font-family="Liberation Sans" text-anchor="end" stroke="#5e5e5e" stroke-width="0.2" lengthAdjust="spacingAndGlyphs">
<text x="102.9" y="419.1" textLength="27.6" lengthAdjust="spacingAndGlyphs">825</text>
<text x="102.9" y="516.6" textLength="27.6" lengthAdjust="spacingAndGlyphs">660</text>
<text x="102.9" y="614.5" textLength="27.6" lengthAdjust="spacingAndGlyphs">495</text>
<text x="102.9" y="711.6" textLength="27.6" lengthAdjust="spacingAndGlyphs">330</text>
<text x="102.9" y="809.1" textLength="27.6" lengthAdjust="spacingAndGlyphs">165</text>
<text x="102.9" y="906.2">0</text>
</g>
<g fill="#5e5e5e" font-size="17.6" font-family="Liberation Sans" text-anchor="middle" stroke="#5e5e5e" stroke-width="0.2">
<text x="188.9" y="918.7" textLength="67.2" lengthAdjust="spacingAndGlyphs">Apr 2020</text>
<text x="299.25" y="918.7" textLength="62.1" lengthAdjust="spacingAndGlyphs">Jul 2020</text>
<text x="410.15" y="918.7" textLength="67.1" lengthAdjust="spacingAndGlyphs">Oct 2020</text>
<text x="521.2" y="918.7" textLength="66.6" lengthAdjust="spacingAndGlyphs">Jan 2021</text>
<text x="630.85" y="918.7" textLength="66.5" lengthAdjust="spacingAndGlyphs">Apr 2021</text>
<text x="740.1" y="918.7" textLength="61.8" lengthAdjust="spacingAndGlyphs">Jul 2021</text>
</g>
<text x="410.3" y="526.8" fill="#5e5e5e" stroke="#5e5e5e" stroke-width="0.15" font-size="15.3" font-family="Liberation Sans" textLength="124.8" lengthAdjust="spacingAndGlyphs">625 on January 12</text>
</svg>
</body></html>
